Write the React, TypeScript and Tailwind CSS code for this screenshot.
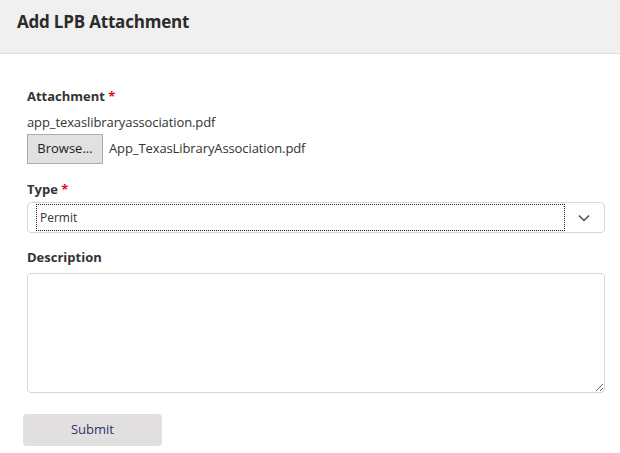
import React from "react";

export default function App() {
  return (
    <div className="w-[620px] h-[453px] bg-white text-[#333] overflow-hidden" style={{ fontFamily: '"Open Sans", "Noto Sans", sans-serif' }}>
      <div className="h-[54px] bg-[#f0f0f0] border-b border-[#dcdcdc] flex items-center px-[17px]">
        <h1 className="text-[17px] font-bold text-[#2b2b2b] -mt-[10px] tracking-[-0.2px]">Add LPB Attachment</h1>
      </div>
      <div className="px-[27px] pt-[33px]">
        <div className="text-[13px] font-bold leading-[18px]">
          Attachment <span className="text-[#d11]">*</span>
        </div>
        <div className="text-[13px] mt-[8px] leading-[18px] tracking-[-0.1px]">app_texaslibraryassociation.pdf</div>
        <div className="flex items-center mt-[3px]">
          <button className="h-[30px] w-[76px] bg-[#e1e1e1] border border-[#adadad] text-[13px] text-[#222]">Browse...</button>
          <span className="text-[13px] ml-[6px] tracking-[-0.1px]">App_TexasLibraryAssociation.pdf</span>
        </div>
        <div className="text-[13px] font-bold leading-[18px] mt-[16px]">
          Type <span className="text-[#d11]">*</span>
        </div>
        <div className="mt-[4px] h-[31px] w-[578px] border border-[#d6d6d6] rounded-[4px] flex items-center pl-[8px] pr-[2px]">
          <div className="h-[27px] flex-1 border border-dotted border-[#222] flex items-center pl-[3px] text-[12px]">Permit</div>
          <div className="w-[37px] flex items-center justify-center">
            <svg width="12" height="8" viewBox="0 0 12 8">
              <path d="M1 1.5 L6 6.5 L11 1.5" fill="none" stroke="#444" strokeWidth="1.3" />
            </svg>
          </div>
        </div>
        <div className="text-[13px] font-bold leading-[18px] mt-[15px]">Description</div>
        <textarea className="mt-[7px] block h-[120px] w-[578px] border border-[#d6d6d6] rounded-[4px] resize-y" />
        <button className="mt-[21px] -ml-[4px] h-[32px] w-[139px] bg-[#e2dfe0] rounded-[4px] text-[13px] text-[#34306a]">Submit</button>
      </div>
    </div>
  );
}
